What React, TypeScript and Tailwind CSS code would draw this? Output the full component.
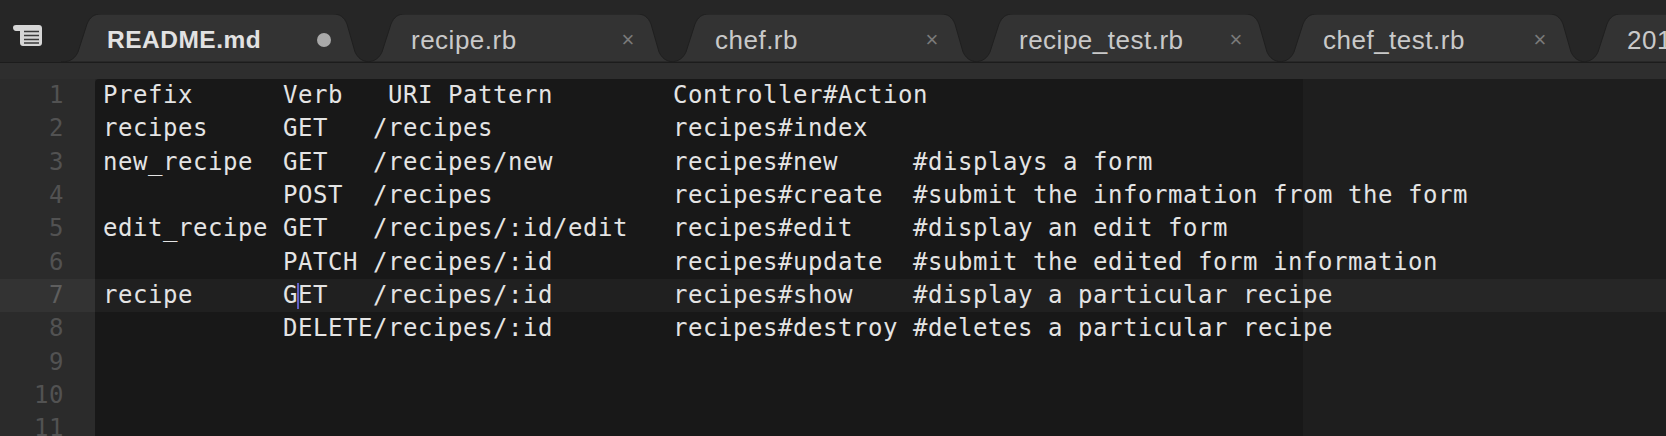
import React from "react";

const row = (prefix: string, verb: string, uri: string, ctrl: string, comment = "") =>
  prefix.padEnd(12) + verb.padEnd(6) + uri.padEnd(20) + ctrl.padEnd(16) + comment;

const lines = [
  "Prefix".padEnd(12) + "Verb".padEnd(7) + "URI Pattern".padEnd(19) + "Controller#Action",
  row("recipes", "GET", "/recipes", "recipes#index"),
  row("new_recipe", "GET", "/recipes/new", "recipes#new", "#displays a form"),
  row("", "POST", "/recipes", "recipes#create", "#submit the information from the form"),
  row("edit_recipe", "GET", "/recipes/:id/edit", "recipes#edit", "#display an edit form"),
  row("", "PATCH", "/recipes/:id", "recipes#update", "#submit the edited form information"),
  row("recipe", "GET", "/recipes/:id", "recipes#show", "#display a particular recipe"),
  row("", "DELETE", "/recipes/:id", "recipes#destroy", "#deletes a particular recipe"),
  "",
  "",
  "",
  "",
];

const tabs = [
  { name: "README.md", dirty: true },
  { name: "recipe.rb" },
  { name: "chef.rb" },
  { name: "recipe_test.rb" },
  { name: "chef_test.rb" },
  { name: "2016.md" },
];

const SidebarIcon = () => (
  <svg width="31" height="23" viewBox="0 0 31 23" fill="none">
    <path
      d="M1 3.5C1 1.8 2.3 1 4 1H27c1.7 0 3 1.3 3 3v15c0 1.7-1.3 3-3 3H11c-1.7 0-3-1.3-3-3V7H4C2.3 7 1 5.5 1 3.5Z"
      fill="#d6d6d6"
    />
    <path d="M12 7.5H27M12 11.5H27M12 15.5H27M12 19H27" stroke="#3a3a3a" strokeWidth="1.6" />
  </svg>
);

const Tab = ({ name, dirty, first }: { name: string; dirty?: boolean; first?: boolean }) => (
  <div className={`relative h-[48px] w-[310px] shrink-0 ${first ? "z-10" : "-ml-[6px]"}`}>
    <svg className="absolute inset-0" width="310" height="48" viewBox="0 0 310 48">
      <path
        d="M0 48C10 48 14 44 17 38L26 10C29 3 33 0 40 0H272C279 0 283 3 286 10L294 38C297 44 301 48 310 48Z"
        fill="#333333"
        stroke="#1f1f1f"
        strokeWidth="1"
      />
    </svg>
    <div className="relative flex h-full items-center pl-[46px] pt-[4px]">
      <span
        className={`w-[210px] whitespace-nowrap leading-[30px] tracking-[0.5px] ${
          dirty ? "text-[24.5px] font-bold text-[#e2e2e2]" : "text-[26px] text-[#c9c9c9]"
        }`}
      >
        {name}
      </span>
      {dirty ? (
        <span className="size-[14px] rounded-full bg-[#a9a9a9]" />
      ) : (
        <span className="w-[14px] text-center text-[22px] leading-[30px] text-[#7a7a7a]">×</span>
      )}
    </div>
  </div>
);

export default function App() {
  return (
    <div className="h-[436px] w-[1666px] overflow-hidden bg-[#262626] font-['Liberation_Sans',Arial,sans-serif]">
      <div className="flex h-[62px] items-end overflow-hidden">
        <div className="flex h-full w-[61px] shrink-0 items-center pl-[12px] pt-[8px]">
          <SidebarIcon />
        </div>
        {tabs.map((t, i) => (
          <Tab key={t.name} name={t.name} dirty={t.dirty} first={i === 0} />
        ))}
      </div>
      <div className="h-[17px] border-t border-[#1c1c1c] bg-[#2e2e2e]" />
      <div className="flex font-['DejaVu_Sans_Mono',monospace] text-[24px] leading-[33.33px] tracking-[0.55px]">
        <div className="w-[95px] shrink-0 bg-[#2b2b2b] text-right text-[#525252]">
          {lines.map((_, i) => (
            <div key={i} className={`pr-[31px] ${i === 6 ? "bg-[#333333] text-[#5e5e5e]" : ""}`}>
              {i + 1}
            </div>
          ))}
        </div>
        <div className="flex-1 rounded-tl-[4px] bg-[linear-gradient(to_right,#181818_1208px,#1e1e1e_1208px)] text-[#e4e4e4]">
          {lines.map((l, i) => (
            <div key={i} className={`relative h-[33.33px] whitespace-pre pl-[8px] ${i === 6 ? "bg-white/[0.035]" : ""}`}>
              {l}
              {i === 6 && (
                <span className="absolute left-[202px] top-[4px] h-[26px] w-[2px] bg-[#5f5fc4]" />
              )}
            </div>
          ))}
        </div>
      </div>
    </div>
  );
}
